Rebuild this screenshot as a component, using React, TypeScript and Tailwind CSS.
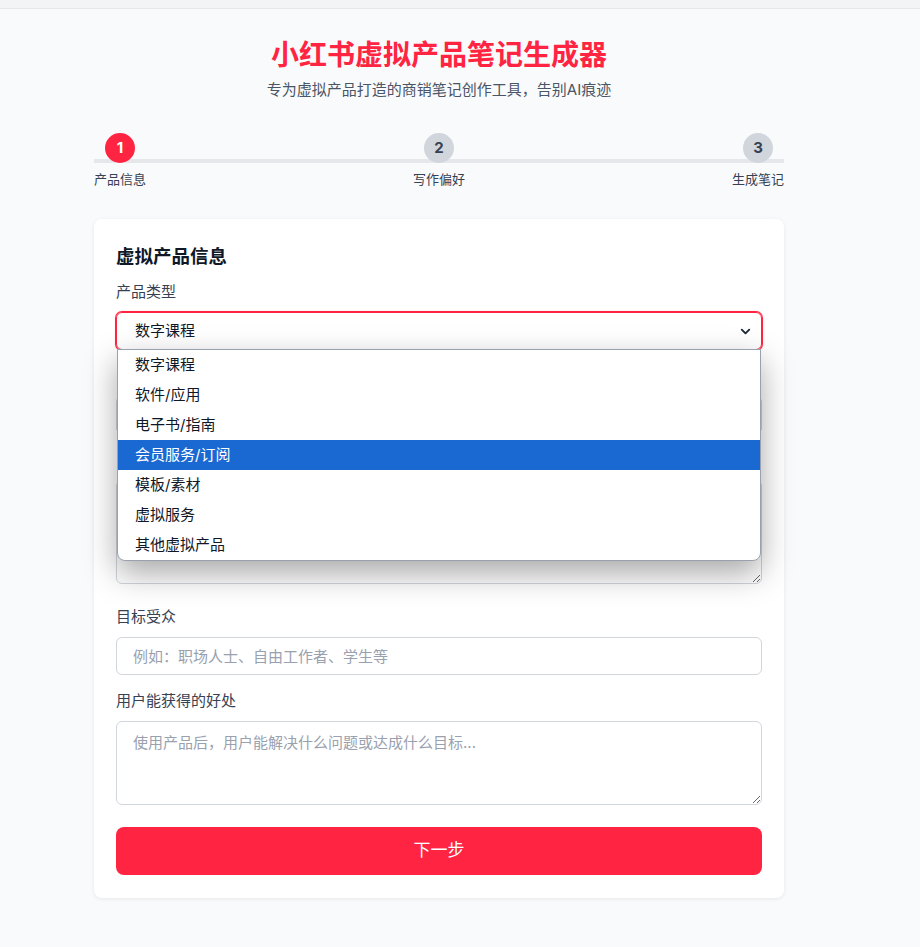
import React from 'react';
import { ChevronDown } from 'lucide-react';

const STEPS = [
  { num: 1, label: '产品信息', active: true },
  { num: 2, label: '写作偏好', active: false },
  { num: 3, label: '生成笔记', active: false },
];

const PRODUCT_TYPES = ['数字课程', '软件/应用', '电子书/指南', '会员服务/订阅', '模板/素材', '虚拟服务', '其他虚拟产品'];

const App: React.FC = () => {
  return (
    <div className="min-h-screen bg-[#f9fafb] font-[Inter,'Noto_Sans_CJK_SC',sans-serif] text-gray-800">
      {/* top strip */}
      <div className="h-[9px] bg-[#f3f4f6] border-b border-gray-200"></div>

      <div className="w-[690px] ml-[94px] pt-[28px] pb-10">
        {/* Header */}
        <div className="text-center mb-8">
          <h1 className="text-[28px] leading-9 font-bold text-[#ff2442]">小红书虚拟产品笔记生成器</h1>
          <p className="mt-1.5 text-[15px] leading-[22px] text-gray-600">专为虚拟产品打造的商销笔记创作工具，告别AI痕迹</p>
        </div>

        {/* Steps */}
        <div className="relative flex justify-between mb-[31px]">
          <div className="absolute left-0 right-0 top-[26px] h-1 bg-gray-200"></div>
          {STEPS.map((step) => (
            <div key={step.num} className="relative z-10 flex flex-col items-center">
              <div
                className={`w-[30px] h-[30px] rounded-full flex items-center justify-center text-[15px] font-bold ${
                  step.active ? 'bg-[#ff2442] text-white' : 'bg-gray-300 text-gray-700'
                }`}
              >
                {step.num}
              </div>
              <div className="mt-[7px] text-[13px] leading-[18px] text-gray-700">{step.label}</div>
            </div>
          ))}
        </div>

        {/* Card */}
        <div className="bg-white rounded-lg shadow-[0_1px_4px_rgba(0,0,0,0.08)] px-[22px] pt-[23px] pb-[23px]">
          <h2 className="text-[18.5px] leading-7 font-bold text-gray-900 mb-3">虚拟产品信息</h2>

          {/* Product type with open list */}
          <div className="mb-4">
            <label className="block text-[15px] leading-5 text-gray-700 mb-2.5">产品类型</label>
            <div className="relative">
              <div className="h-[38px] rounded-md border border-[#ff2442] ring-1 ring-[#ff2442] shadow-[0_0_3px_rgba(255,36,66,0.3)] flex items-center justify-between pl-[18px] pr-2 text-[15px] text-gray-900">
                <span>数字课程</span>
                <ChevronDown size={15} strokeWidth={3} className="text-gray-800" />
              </div>
              <div className="absolute z-20 left-px right-px top-[37px] bg-white border border-gray-400 rounded-b-lg shadow-[0_12px_32px_rgba(0,0,0,0.35)] overflow-hidden">
                {PRODUCT_TYPES.map((t) => (
                  <div
                    key={t}
                    className={`h-[30px] flex items-center px-[17px] text-[15px] ${
                      t === '会员服务/订阅' ? 'bg-[#1a69d3] text-white' : 'text-gray-900'
                    }`}
                  >
                    {t}
                  </div>
                ))}
              </div>
            </div>
          </div>

          {/* Fields covered by the open list */}
          <div className="mb-4">
            <div className="h-5 mb-2.5"></div>
            <input className="w-full h-[38px] rounded-md border border-gray-300 px-4 text-[15px] outline-none" />
          </div>

          <div className="mb-[23px]">
            <div className="h-5 mb-2.5"></div>
            <textarea className="block w-full h-[104px] rounded-md border border-gray-300 px-4 py-2.5 text-[15px] outline-none" />
          </div>

          <div className="mb-4">
            <label className="block text-[15px] leading-5 text-gray-700 mb-2.5">目标受众</label>
            <input
              className="w-full h-[38px] rounded-md border border-gray-300 px-4 text-[15px] placeholder:text-gray-400 outline-none"
              placeholder="例如：职场人士、自由工作者、学生等"
            />
          </div>

          <div className="mb-[22px]">
            <label className="block text-[15px] leading-5 text-gray-700 mb-2.5">用户能获得的好处</label>
            <textarea
              className="block w-full h-[84px] rounded-md border border-gray-300 px-4 py-2.5 text-[15px] leading-[22px] placeholder:text-gray-400 outline-none"
              placeholder="使用产品后，用户能解决什么问题或达成什么目标..."
            />
          </div>

          <button className="w-full h-12 rounded-lg bg-[#ff2442] text-white text-[17px]">下一步</button>
        </div>
      </div>
    </div>
  );
};

export default App;
